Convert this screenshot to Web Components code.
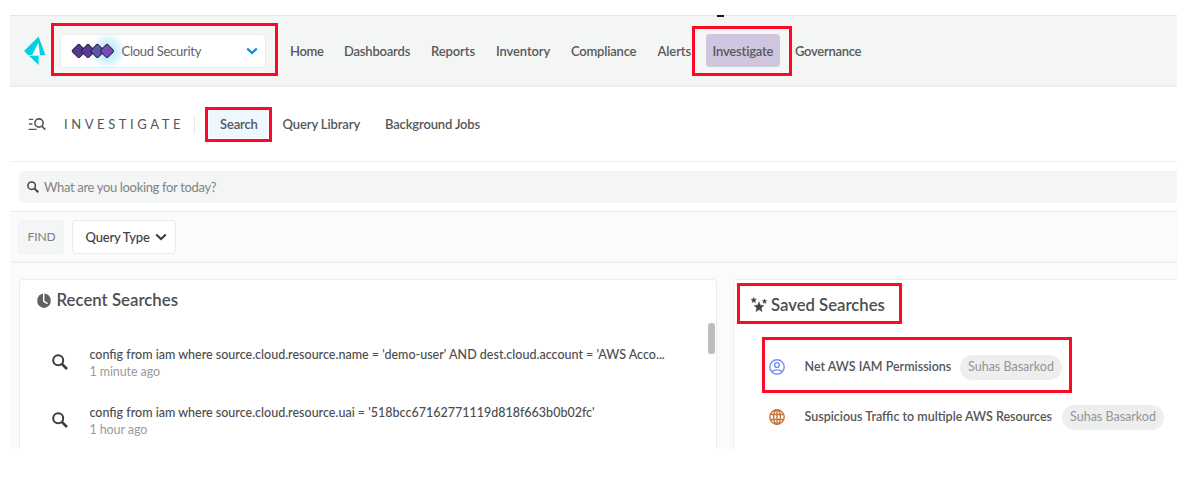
<!DOCTYPE html>
<html lang="en">
<head>
<meta charset="utf-8">
<title>Investigate</title>
<style>
html,body{margin:0;background:#fff}
body{width:1189px;height:482px;overflow:hidden;font-family:Lato,"Liberation Sans",sans-serif;color:#555}
</style>
</head>
<body>
<cloud-console></cloud-console>
<script>
const define=(name,html,init)=>{
  const t=document.createElement('template');t.innerHTML=html;
  customElements.define(name,class extends HTMLElement{
    constructor(){super();this.attachShadow({mode:'open'}).append(t.content.cloneNode(true));}
    connectedCallback(){if(init)init(this);}
  });
};

/* Single line of text; "w" reserves its column, "ls" tunes tracking */
define('t-line',`<style>:host{display:block;white-space:pre;flex:none;line-height:18px}</style><slot></slot>`,e=>{
  if(e.hasAttribute('w'))e.style.width=e.getAttribute('w')+'px';
  if(e.hasAttribute('ls'))e.style.letterSpacing=e.getAttribute('ls')+'px';
});

/* Highlight frame laid over the interface */
define('mark-box',`<style>:host{position:absolute;box-sizing:border-box;border:3px solid #ff0828;z-index:5;pointer-events:none}</style>`,e=>{
  const [x,y,w,h]=e.getAttribute('box').split(' ');
  Object.assign(e.style,{left:x+'px',top:y+'px',width:w+'px',height:h+'px'});
});

const gem=(x,c)=>`<rect x="-5.1" y="-5.1" width="10.2" height="10.2" rx="1.7" transform="translate(${x} 8) rotate(45)" fill="${c}"/>`;
const ICONS={
 logo:['0 0 22 30','<path fill="#00d0e4" d="M14.6 .5L21.4 19.3H14.6V29L0 15z"/><path fill="#fff" d="M14.3 6.8L16 19H8.2z"/><path stroke="#f4f6f5" stroke-width=".7" d="M4.3 19.5H15"/>'],
 chevron:['0 0 12 8','<path d="M1.2 1.5L6 6L10.8 1.5" fill="none" stroke="currentColor" stroke-width="2.2"/>'],
 search:['0 0 16 16','<circle cx="6.2" cy="6.2" r="5" fill="none" stroke="currentColor" stroke-width="2"/><path d="M9.8 9.8L15 15" stroke="currentColor" stroke-width="2.6"/>'],
 listsearch:['0 0 18 13','<path d="M1 1.4H5.2M1 6H4.5M0.5 11.4H8.5" stroke="currentColor" stroke-width="1.4"/><circle cx="11" cy="5" r="4.1" fill="none" stroke="currentColor" stroke-width="1.6"/><path d="M13.8 8L17.3 11.6" stroke="currentColor" stroke-width="1.7"/>'],
 clock:['0 0 14 14','<circle cx="7" cy="7.2" r="6.8" fill="#606163"/><path d="M6.7 0V7.7L10.6 10" fill="none" stroke="#fff" stroke-width="1.4"/>'],
 stars:['0 0 17 16','<g fill="#414244" stroke="#414244" stroke-width=".5"><path d="M8.5 4.8l1.4 3.4 3.7.3-2.8 2.4.9 3.7-3.2-2-3.2 2 .9-3.7-2.8-2.4 3.7-.3z"/><path d="M2.9.4l.8 1.8 2 .2-1.5 1.3.5 1.9-1.8-1-1.7 1 .4-1.9L.1 2.4l2-.2z"/><path d="M14.4 2l.7 1.6 1.6.1-1.2 1.1.4 1.6-1.5-.9-1.4.9.4-1.6-1.3-1.1 1.6-.1z"/></g>'],
 user:['0 0 16 16','<g fill="none" stroke="#728cf5" stroke-width="1.4"><circle cx="8" cy="8" r="7.2"/><circle cx="8" cy="6" r="2.4"/><path d="M2.8 12.8C5.3 10.2 10.7 10.2 13.2 12.8"/></g>'],
 globe:['0 0 16 16','<g fill="none" stroke="#c87439" stroke-width="1.4"><circle cx="8" cy="8" r="7.2"/><ellipse cx="8" cy="8" rx="3.4" ry="7.2"/><path d="M8 .8V15.2M1.4 5.5H14.6M1.4 10.5H14.6"/></g>'],
 gems:['0 0 45 16',`<g stroke="#242340" stroke-width="1">${gem(7.8,'#56398c')}${gem(17,'#5c3a96')}${gem(26.4,'#5d57ac')}${gem(36,'#764bb4')}</g>`]
};
define('ui-icon',`<style>:host{display:block;flex:none}svg{display:block;width:100%;height:100%}</style><div></div>`,e=>{
  const [vb,p]=ICONS[e.getAttribute('name')];
  const [w,h]=e.getAttribute('size').split(' ');
  e.style.width=w+'px';e.style.height=h+'px';
  const d=e.shadowRoot.querySelector('div');d.style.height=h+'px';
  d.innerHTML=`<svg viewBox="${vb}" preserveAspectRatio="none">${p}</svg>`;
});

define('top-bar',`<style>
:host{display:flex;box-sizing:border-box;height:72px;background:#f4f6f5;border-top:1px solid #e3e6e5;border-bottom:2px solid #eceeed;padding-left:14px;align-items:center;font-size:13px;font-weight:600;color:#58595b}
.pick{display:flex;flex:none;box-sizing:border-box;align-items:center;width:206px;height:34px;margin-left:14px;background:#fff;border:1px solid #eaecec;border-radius:4px;padding-left:10px;font-weight:400;color:#636466}
.glow{flex:none;width:62px;padding:8px 0;margin-right:-11.5px;background:radial-gradient(circle at 37px 16px,#b5e8f9 0,#cdf0fb 9px,#ffffff00 18px)}
.name{width:124.5px}
.chev{color:#078bd8}
nav{display:flex;flex:none;align-items:center;margin-left:24px}
.on{box-sizing:border-box;flex:none;background:#cfc5df;border-radius:4px;width:74px;height:33px;display:flex;align-items:center;padding-left:6.5px;margin-right:15px}
</style>
<ui-icon name="logo" size="22 30"></ui-icon>
<div class="pick"><div class="glow"><ui-icon name="gems" size="45 16"></ui-icon></div><t-line class="name" ls="-.28">Cloud Security</t-line><ui-icon class="chev" name="chevron" size="12 8"></ui-icon></div>
<nav><t-line w="54" ls="-.35">Home</t-line><t-line w="87" ls="-.2">Dashboards</t-line><t-line w="65" ls="-.1">Reports</t-line><t-line w="75" ls="-.12">Inventory</t-line><t-line w="86.5" ls="-.2">Compliance</t-line><t-line w="48.5" ls="-.1">Alerts</t-line><div class="on"><t-line ls="-.18">Investigate</t-line></div><t-line ls="-.3">Governance</t-line></nav>`);

define('sub-nav',`<style>
:host{display:flex;box-sizing:border-box;height:75px;background:#fff;border-bottom:1px solid #eef0ef;padding-left:18px;align-items:center;font-size:13px;font-weight:600;color:#555658}
.title{margin-left:18px;width:130px;font-weight:400;font-size:13px}
.sep{width:1px;height:19px;background:#e7e9e9}
.on{display:flex;box-sizing:border-box;width:60px;height:28px;background:#ecf8fd;margin-left:13.5px;padding-left:11.5px;align-items:center}
.rest{margin-left:14px;display:flex}
</style>
<ui-icon name="listsearch" size="18 13"></ui-icon><t-line class="title" ls="3.58">INVESTIGATE</t-line><div class="sep"></div><div class="on"><t-line ls="-.15">Search</t-line></div><div class="rest"><t-line w="102.5" ls="-.12">Query Library</t-line><t-line ls="-.15">Background Jobs</t-line></div>`);

define('search-field',`<style>
:host{display:block;box-sizing:border-box;height:49px;background:#fff;padding:9px 0 0 9px}
.f{display:flex;height:32px;background:#f4f6f5;border-radius:4px 0 0 4px;align-items:center;padding-left:8px;font-size:13px;color:#818385}
ui-icon{color:#3f4042;margin-right:5px}
</style><div class="f"><ui-icon name="search" size="12 12"></ui-icon><t-line ls="-.34">What are you looking for today?</t-line></div>`);

define('filter-bar',`<style>
:host{display:flex;box-sizing:border-box;height:52px;background:#fafcfb;border-top:1px solid #eaeceb;border-bottom:2px solid #eff1f0;padding:8px 0 0 8px;font-size:13px}
div{display:flex;box-sizing:border-box;align-items:center;height:34px;border-radius:4px}
.find{width:46px;background:#f4f6f5;padding-left:8.5px;color:#7a7c7e;border:1px solid #f1f3f2;font-size:12px}
.type{width:104px;background:#fff;border:1px solid #eaecec;margin-left:8px;padding-left:12.5px;color:#3f4042;font-weight:500}
.type t-line{width:69px}
</style><div class="find"><t-line ls="-.1">FIND</t-line></div><div class="type"><t-line ls="-.2">Query Type</t-line><ui-icon name="chevron" size="12 8"></ui-icon></div>`);

define('query-row',`<style>
:host{display:flex;height:58px;font-size:12.5px;align-items:flex-start}
ui-icon{color:#3a3b3d;margin:8px 21.5px 0 0}
.q{font-weight:500;color:#4b4c4e}
.ago{color:#999b9d;line-height:16px}
</style><ui-icon name="search" size="16 16"></ui-icon><div><t-line class="q"><slot></slot></t-line><t-line class="ago" ls="-.1"><slot name="ago"></slot></t-line></div>`);

define('saved-row',`<style>
:host{display:flex;align-items:center;height:50px;font-size:12.5px;font-weight:600;color:#555658}
ui-icon{margin-right:20px}
.tag{box-sizing:border-box;width:102px;height:25px;border-radius:13px;background:#edeeee;color:#939597;font-weight:400;display:flex;align-items:center;justify-content:center;font-size:12.5px}
</style><t-line class="n"><slot></slot></t-line><div class="tag"><t-line><slot name="tag"></slot></t-line></div>`,e=>{
  const r=e.shadowRoot,i=document.createElement('ui-icon'),n=r.querySelector('.n');
  i.setAttribute('name',e.getAttribute('icon'));i.setAttribute('size','16 16');
  n.before(i);
  n.style.width=e.getAttribute('w')+'px';
});

define('recent-panel',`<style>
:host{display:flex;flex:none;box-sizing:border-box;width:698px;height:170px;background:#fff;border:1px solid #eceeed;border-bottom:0;border-radius:4px 4px 0 0;justify-content:space-between}
main{padding-left:17px}
h2{display:flex;align-items:center;height:22px;margin:9px 0 0 0;font-size:16.8px;font-weight:600;color:#4d4e50}
h2 t-line{margin-left:5.5px;line-height:20px}
.rows{padding:35px 0 0 15px}
.bar{width:7px;height:31px;border-radius:3px;background:#bdbdbd;margin:43px 1px 0 0}
</style><main><h2><ui-icon name="clock" size="14 15"></ui-icon><t-line>Recent Searches</t-line></h2>
<div class="rows"><query-row>config from iam where source.cloud.resource.name = 'demo-user' AND dest.cloud.account = 'AWS Acco...<span slot="ago">1 minute ago</span></query-row><query-row>config from iam where source.cloud.resource.uai = '518bcc67162771119d818f663b0b02fc'<span slot="ago">1 hour ago</span></query-row></div></main><div class="bar"></div>`);

define('saved-panel',`<style>
:host{display:block;box-sizing:border-box;flex:1;height:170px;background:#fff;border:1px solid #eceeed;border-width:1px 0 0 1px;border-radius:4px 0 0 0;padding-left:17px}
h2{display:flex;align-items:center;height:22px;margin:14px 0 0;font-size:16.7px;font-weight:600;color:#4d4e50}
h2 t-line{margin-left:4px}
.rows{padding:26px 0 0 17.5px}
</style><h2><ui-icon name="stars" size="16 16"></ui-icon><t-line>Saved Searches</t-line></h2>
<div class="rows"><saved-row icon="user" w="155.5">Net AWS IAM Permissions<span slot="tag">Suhas Basarkod</span></saved-row><saved-row icon="globe" w="257.5">Suspicious Traffic to multiple AWS Resources<span slot="tag">Suhas Basarkod</span></saved-row></div>`);

define('cloud-console',`<style>
:host{display:block;position:relative;width:1189px;height:482px}
.page{box-sizing:border-box;padding:15px 12px 0 10px}
.panels{display:flex;gap:16px;box-sizing:border-box;height:186px;padding:16px 0 0 9px;background:#fafcfb;overflow:hidden}
.dash{position:absolute;left:717px;top:15px;width:7px;height:1.5px;background:#171717}
</style><div class="page"><top-bar></top-bar><sub-nav></sub-nav><search-field></search-field><filter-bar></filter-bar><div class="panels"><recent-panel></recent-panel><saved-panel></saved-panel></div></div>
<div class="dash"></div>
<mark-box box="51 23 227 53"></mark-box><mark-box box="692 26 100 50"></mark-box><mark-box box="205 107 67 35"></mark-box><mark-box box="737 283 165 41"></mark-box><mark-box box="762 337 310 56"></mark-box>`);
</script>
</body>
</html>
